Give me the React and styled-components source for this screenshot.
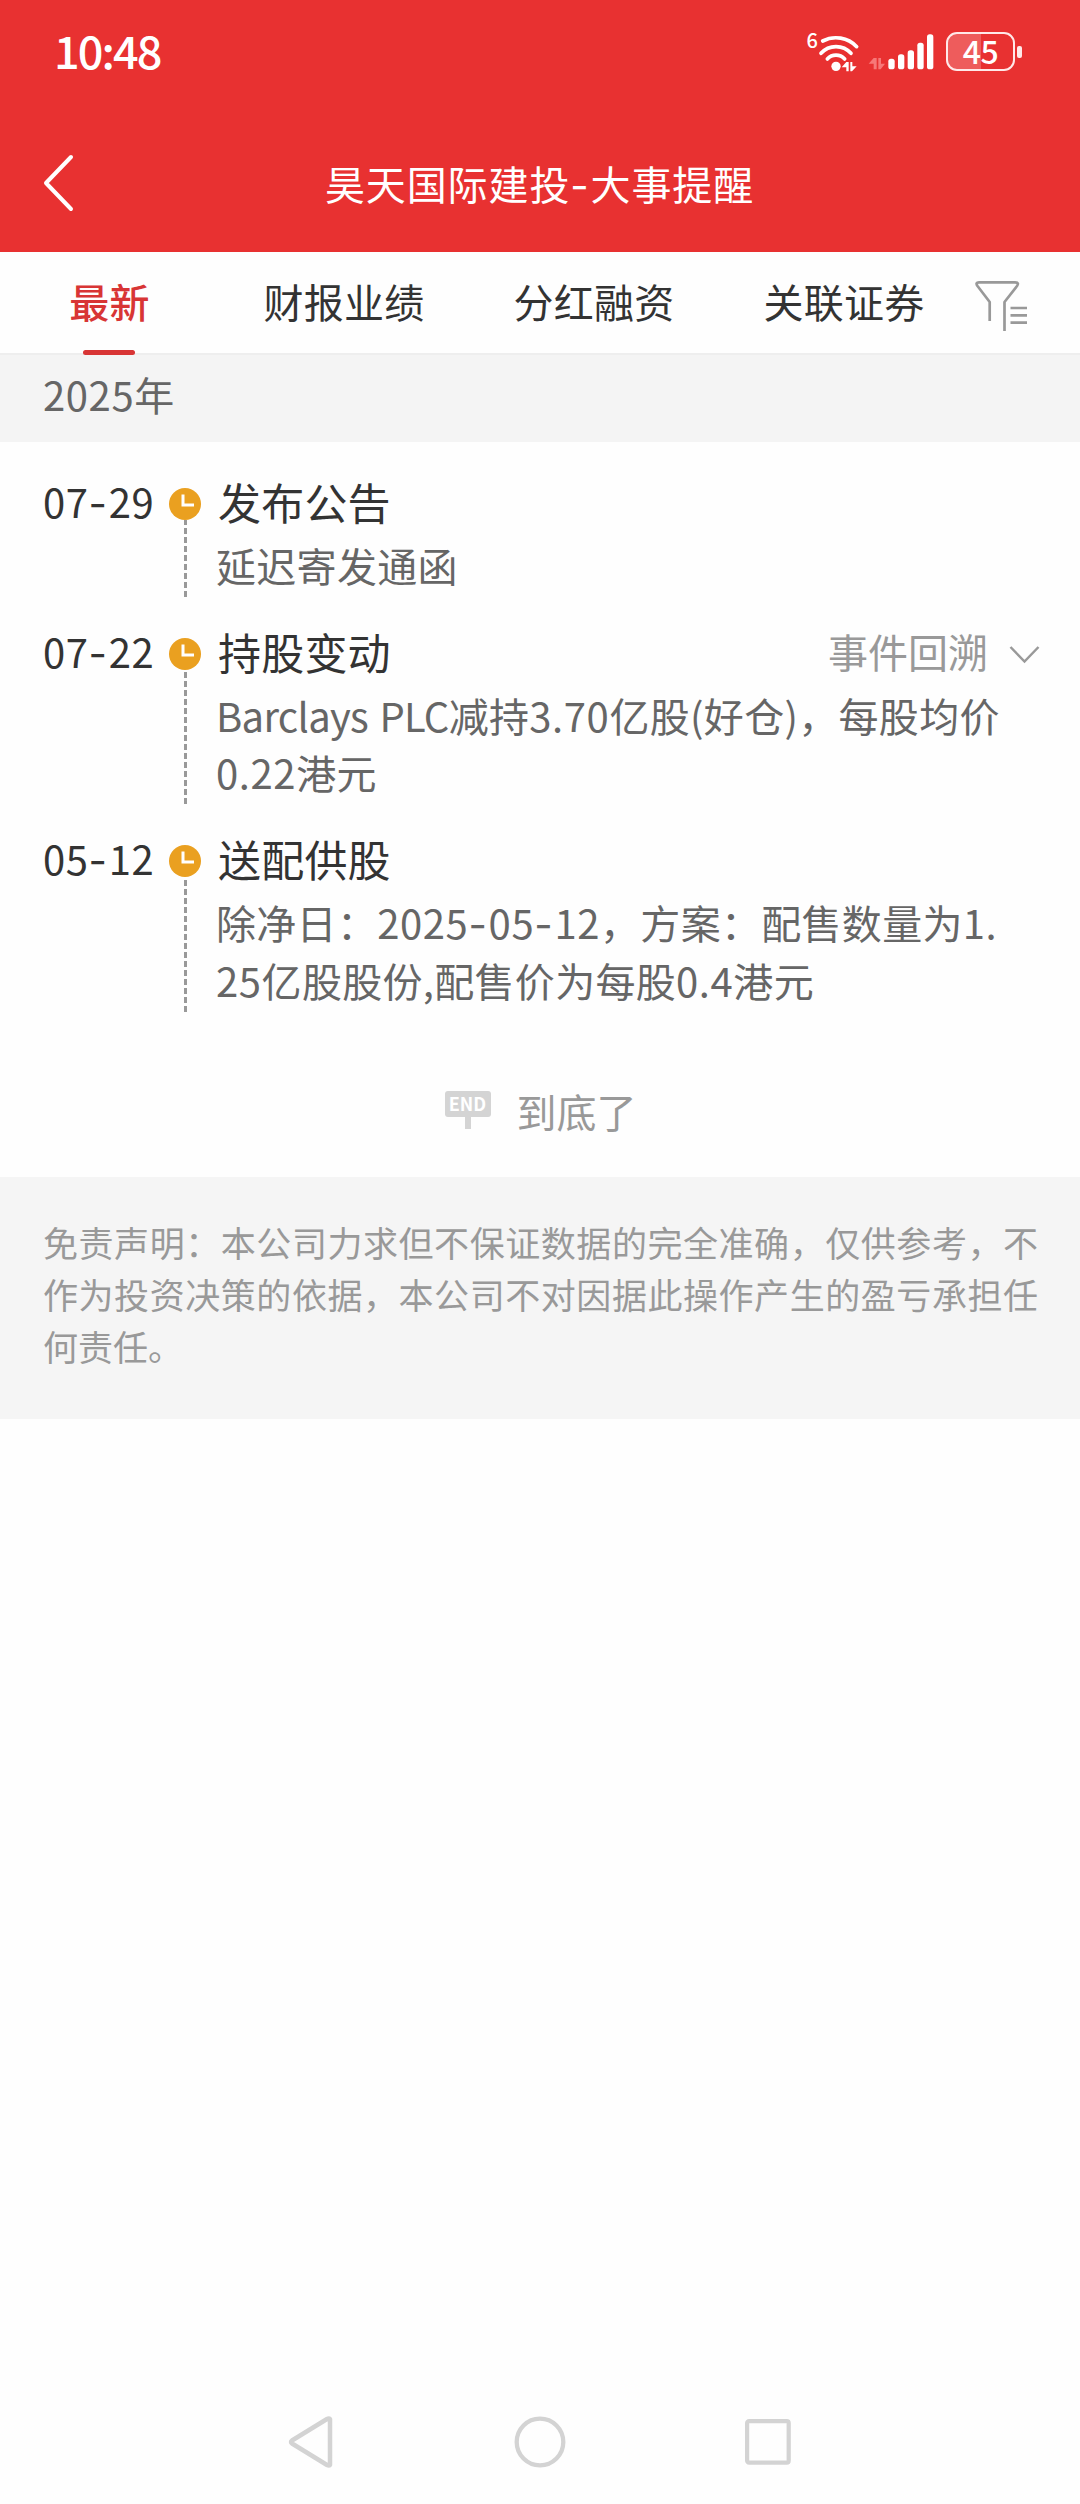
import React, { useState } from 'react';
import styled, { createGlobalStyle } from 'styled-components';

const GlobalStyle = createGlobalStyle`
  * {
    box-sizing: border-box;
  }

  body {
    margin: 0;
    background: #fefefe;
    color: #333;
    font-family: "Noto Sans CJK SC", sans-serif;
    font-size: 40px;
  }

  svg {
    display: block;
    flex: none;
  }
`;

const Page = styled.div`
  display: flex;
  flex-direction: column;
  width: 1080px;
  height: 2504px;
  overflow: hidden;
`;

const Header = styled.header`
  height: 252px;
  background: #e83131;
  color: #fff;
`;

const StatusBar = styled.div`
  display: flex;
  align-items: center;
  height: 103px;
  padding: 0 58px 0 54px;
`;

const Time = styled.span`
  flex: 1;
  padding-bottom: 4px;
  font-size: 45px;
  line-height: 60px;
  font-weight: 500;
  letter-spacing: -1.9px;
`;

const WifiLabel = styled.span`
  align-self: flex-start;
  margin-top: 28px;
  font-size: 20px;
  line-height: 24px;
  font-weight: 500;
`;

const Battery = styled.div`
  width: 69px;
  height: 39px;
  margin-left: 12px;
  border: 2.5px solid #ffe9e9;
  border-radius: 11px;
  background: linear-gradient(to right, #ee5c5c 51%, #e83131 51%);
  font-size: 32px;
  line-height: 32px;
  font-weight: 500;
  letter-spacing: -0.5px;
  text-align: center;
`;

const BatteryTip = styled.div`
  width: 5px;
  height: 12px;
  margin-left: 2px;
  border-radius: 2px;
  background: #ffe9e9;
`;

const TitleBar = styled.div`
  display: grid;
  grid-template-columns: 80px 1fr 80px;
  align-items: center;
  height: 160px;
  padding-right: 1px;
`;

const BackButton = styled.button`
  padding: 0 0 0 42px;
  border: 0;
  background: none;
`;

const Title = styled.h1`
  margin: 0;
  font-size: 40px;
  line-height: 60px;
  font-weight: 400;
  letter-spacing: 0.9px;
  text-align: center;
`;

const Tabs = styled.nav`
  display: flex;
  height: 103px;
  border-bottom: 2px solid #eee;
`;

const Tab = styled.button`
  position: relative;
  width: ${({ $first }) => ($first ? '219px' : '250px')};
  padding: 0 0 4px;
  border: 0;
  background: none;
  color: ${({ $active }) => ($active ? '#d83535' : '#333')};
  font: inherit;
  font-weight: ${({ $active }) => ($active ? 500 : 400)};
  letter-spacing: 0.3px;

  &::after {
    content: '';
    display: ${({ $active }) => ($active ? 'block' : 'none')};
    position: absolute;
    left: calc(50% - 26.5px);
    bottom: -2px;
    width: 52px;
    height: 5px;
    border-radius: 3px;
    background: #d83535;
  }
`;

const FilterButton = styled.button`
  padding: 28px 0 0 5px;
  align-self: flex-start;
  border: 0;
  background: none;
`;

const Year = styled.div`
  height: 87px;
  padding-left: 43px;
  background: #f4f4f4;
  color: #666;
  line-height: 79px;
`;

const Timeline = styled.ul`
  display: flex;
  flex-direction: column;
  gap: 26.5px;
  margin: 0;
  padding: 28.5px 40px 0 43px;
  list-style: none;
`;

const Item = styled.li`
  display: grid;
  grid-template-columns: 126px 32px 1fr;
`;

const ItemDate = styled.time`
  line-height: 60px;
  white-space: nowrap;
`;

const Marker = styled.div`
  display: flex;
  flex-direction: column;
  align-items: center;
  padding-top: 17px;
  margin-bottom: -2.5px;
`;

const DashedLine = styled.div`
  flex: 1;
  width: 3px;
  margin-right: -1px;
  background: repeating-linear-gradient(to top, #999 0 6px, transparent 6px 9px);
`;

const ItemBody = styled.div`
  padding-left: 15px;
`;

const ItemHead = styled.div`
  display: flex;
  align-items: center;
  justify-content: space-between;
  height: 60px;
  padding-left: 2px;
`;

const ItemTitle = styled.h2`
  margin: 0;
  font-size: 43px;
  line-height: 60px;
  font-weight: 400;
  letter-spacing: 0.2px;
`;

const Review = styled.button`
  display: flex;
  align-items: center;
  gap: 21px;
  padding: 0;
  border: 0;
  background: none;
  color: #999;
  font: inherit;

  svg {
    margin-top: 7px;
  }
`;

const Description = styled.p`
  margin: 6px 0 0;
  color: #666;
  line-height: 57.5px;
  letter-spacing: 0.3px;
  white-space: nowrap;
`;

const Latin = styled.span`
  letter-spacing: ${({ $number }) => ($number ? '0.6px' : '-0.7px')};
  word-spacing: 3px;
`;

// zero line height keeps the second font from stretching the line
const Dash = styled.span`
  font-family: Inter, sans-serif;
  line-height: 0;
  letter-spacing: 1.8px;
`;

const EndNote = styled.div`
  display: flex;
  justify-content: center;
  gap: 26px;
  height: 168px;
  padding: 72px 0 0 1px;
  color: #999;
  line-height: 60px;
`;

const EndSign = styled.span`
  display: flex;
  flex-direction: column;
  align-items: center;
  margin-top: 10px;

  &::after {
    content: '';
    width: 6px;
    height: 12px;
    background: #d4d4d4;
  }
`;

const EndBoard = styled.span`
  width: 46px;
  height: 26px;
  border-radius: 3px;
  background: #d4d4d4;
  color: #fff;
  font-size: 18px;
  line-height: 24px;
  font-weight: 700;
  text-align: center;
`;

const Disclaimer = styled.p`
  margin: 0;
  height: 242px;
  padding: 39px 42px 0 43px;
  background: #f5f5f5;
  color: #999;
  font-size: 35px;
  line-height: 52px;
  text-align: justify;
`;

const NavBar = styled.footer`
  display: flex;
  align-items: center;
  justify-content: center;
  gap: 179px;
  height: 124px;
  margin-top: auto;
  padding-right: 2px;
`;

const TABS = ['最新', '财报业绩', '分红融资', '关联证券'];

const EVENTS = [
  { date: '07-29', title: '发布公告', lines: ['延迟寄发通函'] },
  {
    date: '07-22',
    title: '持股变动',
    lines: ['Barclays PLC减持3.70亿股(好仓)，每股均价', '0.22港元'],
    review: true,
  },
  {
    date: '05-12',
    title: '送配供股',
    lines: ['除净日：2025-05-12，方案：配售数量为1.', '25亿股股份,配售价为每股0.4港元'],
  },
];

// latin letters, digits and dashes are spaced differently from the chinese text
function Mixed({ text }) {
  return text.split(/(-|[A-Za-z ]+|[\d.]+)/).filter(Boolean).map((part, i) => {
    if (part === '-') return <Dash key={i}>-</Dash>;
    if (/^[\d.]/.test(part)) return <Latin key={i} $number>{part}</Latin>;
    if (/^[A-Za-z ]/.test(part)) return <Latin key={i}>{part}</Latin>;
    return part;
  });
}

const WifiIcon = () => (
  <svg width="50" height="40" viewBox="112 60 150 120" fill="none" stroke="#fff" strokeWidth="11" strokeLinecap="round">
    <path d="M126 87A86 86 0 0 1 228 104" />
    <path d="M121 124A60 60 0 0 1 211 124" />
    <path d="M140 141A35 35 0 0 1 192 141" />
    <circle cx="166" cy="163" r="14" fill="#fff" stroke="none" />
    <path d="M183 166L197 150H204V178H197V166ZM209 150H215V163H228L214 178H209Z" fill="#fff" stroke="none" />
  </svg>
);

const SignalIcon = () => (
  <svg width="66" height="36" viewBox="262 71 198 108" fill="#fff">
    <path d="M264 160L279 143H288V177H279V160ZM293 143H301V160H313L300 177H293Z" fill="#f77878" />
    <rect x="323" y="145" width="19" height="32" rx="8" />
    <rect x="352" y="132" width="19" height="45" rx="8" />
    <rect x="381" y="120" width="19" height="57" rx="8" />
    <rect x="410" y="97" width="19" height="80" rx="8" />
    <rect x="439" y="72" width="19" height="105" rx="8" />
  </svg>
);

const BackIcon = () => (
  <svg width="34" height="58" viewBox="0 0 34 58" fill="none" stroke="#fff" strokeWidth="4" strokeLinecap="round" strokeLinejoin="round">
    <path d="M29 3L4 29L29 55" />
  </svg>
);

const FilterIcon = () => (
  <svg width="56" height="53" viewBox="0 0 56 53" fill="none" stroke="#999" strokeWidth="2.7" strokeLinejoin="round">
    <path d="M15.7 41V22L3.5 6Q1 2.4 5 2.4H41Q45.5 2.4 43 6L30.5 22V51" />
    <path d="M36.5 28H53M36.5 35.3H53M36.5 42.6H53" />
  </svg>
);

const ClockIcon = () => (
  <svg width="32" height="32" viewBox="0 0 32 32">
    <circle cx="16" cy="16" r="16" fill="#eaa020" />
    <path d="M14 6.5V17H25" fill="none" stroke="#fff" strokeWidth="3" />
  </svg>
);

const ChevronIcon = () => (
  <svg width="31" height="19" viewBox="0 0 31 19" fill="none" stroke="#999" strokeWidth="2.5">
    <path d="M1.5 2L15.5 16.5L29.5 2" />
  </svg>
);

function App() {
  const [activeTab, setActiveTab] = useState(TABS[0]);

  return (
    <Page>
      <GlobalStyle />
      <Header>
        <StatusBar>
          <Time>10:48</Time>
          <WifiLabel>6</WifiLabel>
          <WifiIcon />
          <SignalIcon />
          <Battery>45</Battery>
          <BatteryTip />
        </StatusBar>
        <TitleBar>
          <BackButton aria-label="返回"><BackIcon /></BackButton>
          <Title><Mixed text="昊天国际建投-大事提醒" /></Title>
        </TitleBar>
      </Header>
      <Tabs>
        {TABS.map((tab, i) => (
          <Tab
            key={tab}
            $first={i === 0}
            $active={tab === activeTab}
            onClick={() => setActiveTab(tab)}
          >
            {tab}
          </Tab>
        ))}
        <FilterButton aria-label="筛选"><FilterIcon /></FilterButton>
      </Tabs>
      <Year><Mixed text="2025年" /></Year>
      <Timeline>
        {EVENTS.map((event) => (
          <Item key={event.date}>
            <ItemDate><Mixed text={event.date} /></ItemDate>
            <Marker>
              <ClockIcon />
              <DashedLine />
            </Marker>
            <ItemBody>
              <ItemHead>
                <ItemTitle>{event.title}</ItemTitle>
                {event.review && (
                  <Review>
                    事件回溯
                    <ChevronIcon />
                  </Review>
                )}
              </ItemHead>
              <Description>
                {event.lines.map((line) => (
                  <React.Fragment key={line}>
                    <Mixed text={line} />
                    <br />
                  </React.Fragment>
                ))}
              </Description>
            </ItemBody>
          </Item>
        ))}
      </Timeline>
      <EndNote>
        <EndSign><EndBoard>END</EndBoard></EndSign>
        到底了
      </EndNote>
      <Disclaimer>
        免责声明：本公司力求但不保证数据的完全准确，仅供参考，不作为投资决策的依据，本公司不对因据此操作产生的盈亏承担任何责任。
      </Disclaimer>
      <NavBar>
        <svg width="48" height="54" viewBox="0 0 48 54" fill="none" stroke="#d3d3d3" strokeWidth="4.5" strokeLinejoin="round">
          <path d="M43 4V50Q42 51 40 50L5 28.5Q3 27 5 25.5L40 4Q42 3 43 4Z" />
        </svg>
        <svg width="52" height="52" viewBox="0 0 52 52" fill="none" stroke="#d3d3d3" strokeWidth="4.3">
          <circle cx="26" cy="26" r="23.3" />
        </svg>
        <svg width="46" height="46" viewBox="0 0 46 46" fill="none" stroke="#d3d3d3" strokeWidth="4.2">
          <rect x="2.1" y="2.1" width="41.6" height="41.6" rx="2" />
        </svg>
      </NavBar>
    </Page>
  );
}

export default App;
